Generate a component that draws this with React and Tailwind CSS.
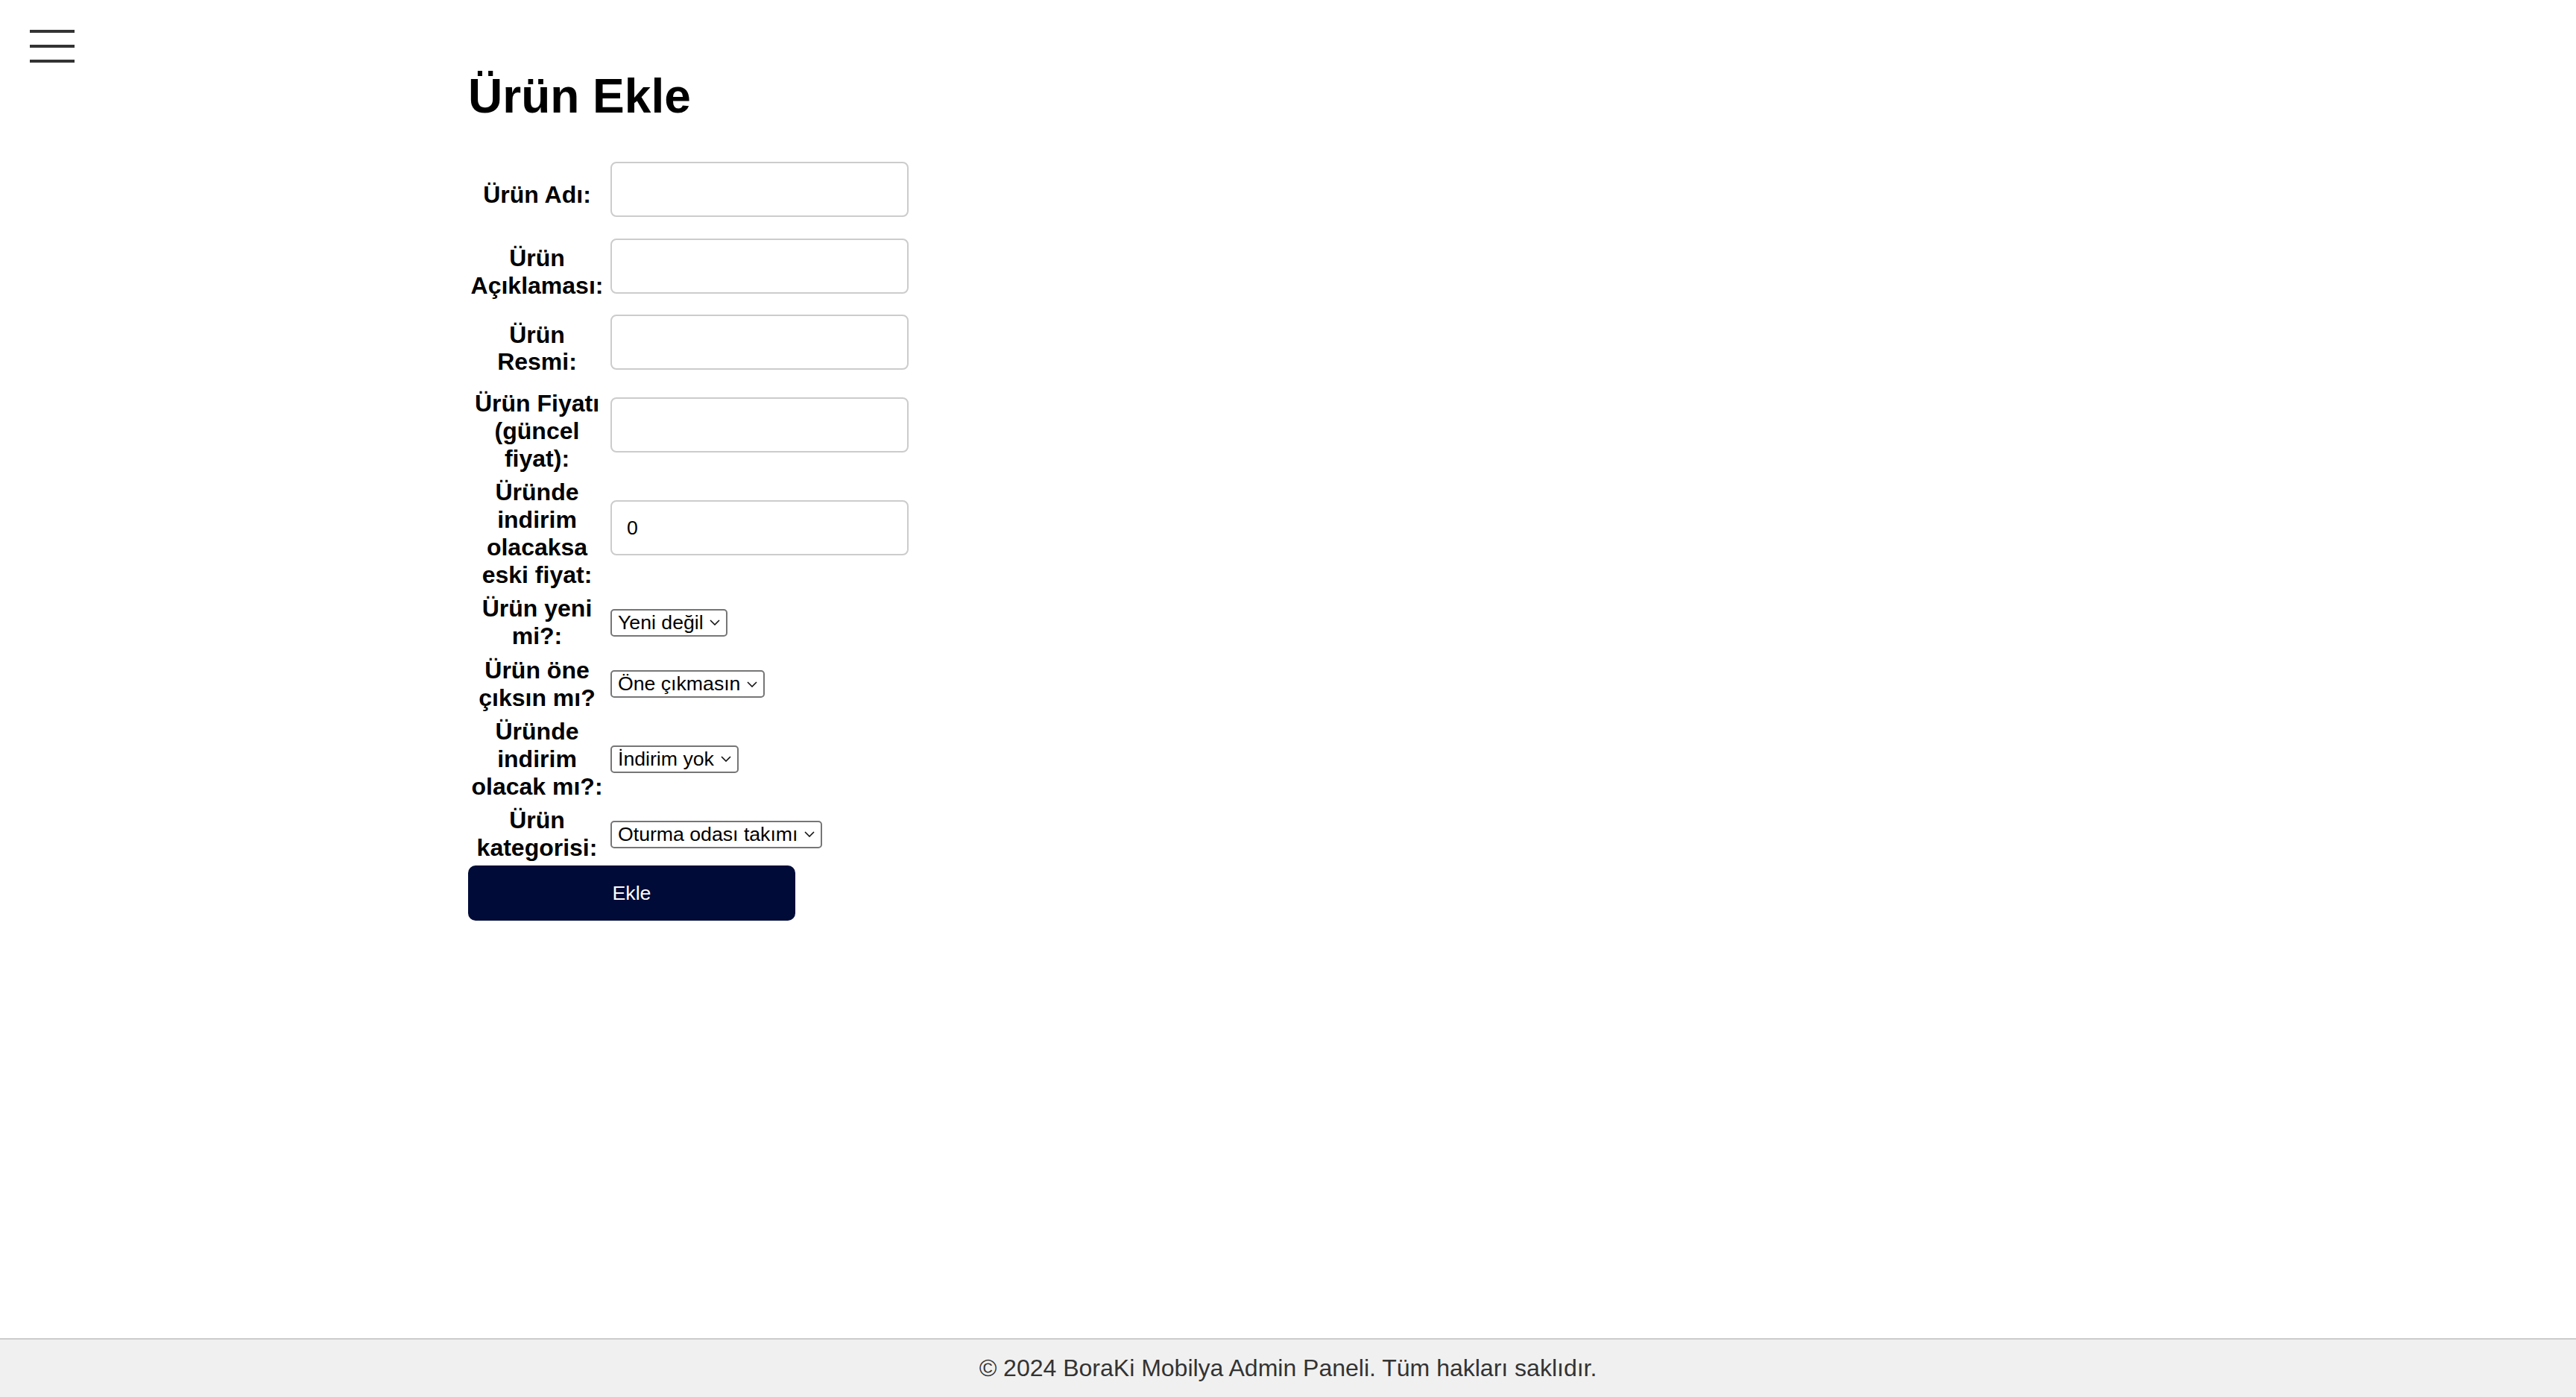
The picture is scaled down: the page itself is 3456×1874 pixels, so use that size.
import React from "react";

function Chevron() {
  return (
    <svg
      width="14"
      height="8"
      viewBox="0 0 14 8"
      className="pointer-events-none absolute right-[10px] top-1/2 -translate-y-1/2"
    >
      <path d="M1 1l6 6 6-6" stroke="#111" strokeWidth="1.6" fill="none" />
    </svg>
  );
}

function Select({ width, options }) {
  return (
    <span className={`relative inline-block align-middle ${width}`}>
      <select
        defaultValue={options[0]}
        className="block w-full h-[37px] appearance-none border-2 border-[#767676] rounded-[5px] bg-white pl-[8px] pr-[30px] text-[26.67px] leading-[31px] text-black"
      >
        {options.map((o) => (
          <option key={o}>{o}</option>
        ))}
      </select>
      <Chevron />
    </span>
  );
}

function TextInput({ value }) {
  return (
    <input
      type="text"
      defaultValue={value}
      className="block w-[400px] h-[74px] mt-[2px] mb-[18px] border-2 border-[#cccccc] rounded-[8px] bg-white px-[20px] text-[26.67px] text-black outline-none"
    />
  );
}

function Row({ label, children }) {
  return (
    <tr>
      <th className="w-[185px] px-[2px] py-[2.4px] text-center align-middle font-bold text-[32px] leading-[36.8px] text-black">
        {label}
      </th>
      <td className="px-[2px] py-[2.4px] align-middle">{children}</td>
    </tr>
  );
}

export default function App() {
  return (
    <div className="min-h-screen flex flex-col bg-white font-['Liberation_Sans',Arial,Helvetica,sans-serif] text-black">
      <div className="pt-[40px] pl-[40px]">
        <button className="flex flex-col gap-[16px] w-[60px]" aria-label="menu">
          <span className="block w-[60px] h-[4px] bg-[#333333]" />
          <span className="block w-[60px] h-[4px] bg-[#333333]" />
          <span className="block w-[60px] h-[4px] bg-[#333333]" />
        </button>
      </div>

      <main className="pl-[628px]">
        <h1 className="mt-[9px] mb-[42px] text-[64px] leading-[73.5px] font-bold text-black">
          Ürün Ekle
        </h1>

        <form>
          <table className="border-separate border-spacing-[4px] -ml-[4px]">
            <tbody>
              <Row label="Ürün Adı:">
                <TextInput value="" />
              </Row>
              <Row label="Ürün Açıklaması:">
                <TextInput value="" />
              </Row>
              <Row label="Ürün Resmi:">
                <TextInput value="" />
              </Row>
              <Row label="Ürün Fiyatı (güncel fiyat):">
                <TextInput value="" />
              </Row>
              <Row label="Üründe indirim olacaksa eski fiyat:">
                <TextInput value="0" />
              </Row>
              <Row label="Ürün yeni mi?:">
                <Select width="w-[157px]" options={["Yeni değil", "Yeni"]} />
              </Row>
              <Row label="Ürün öne çıksın mı?">
                <Select width="w-[207px]" options={["Öne çıkmasın", "Öne çıksın"]} />
              </Row>
              <Row label="Üründe indirim olacak mı?:">
                <Select width="w-[172px]" options={["İndirim yok", "İndirim var"]} />
              </Row>
              <Row label="Ürün kategorisi:">
                <Select
                  width="w-[284px]"
                  options={[
                    "Oturma odası takımı",
                    "Yatak odası takımı",
                    "Yemek odası takımı",
                  ]}
                />
              </Row>
            </tbody>
          </table>

          <button
            type="button"
            className="block w-[439px] h-[74px] -mt-[1px] rounded-[10px] bg-[#000b38] text-white text-[26.67px] text-center"
          >
            Ekle
          </button>
        </form>
      </main>

      <footer className="mt-auto border-t-2 border-[#cccccc] bg-[#f0f0f0] py-[20px] text-center text-[32px] leading-[37px] text-[#333333]">
        © 2024 BoraKi Mobilya Admin Paneli. Tüm hakları saklıdır.
      </footer>
    </div>
  );
}
